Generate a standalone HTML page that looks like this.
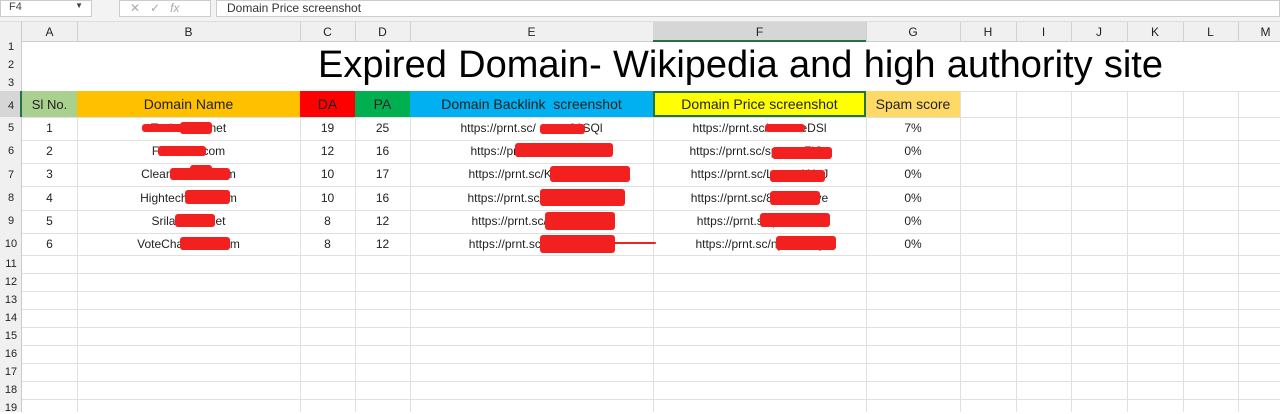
<!DOCTYPE html><html><head><style>
body{margin:0;width:1280px;height:412px;overflow:hidden;background:#fff;font-family:"Liberation Sans",sans-serif;position:relative}
.a{position:absolute;box-sizing:border-box}
.t{position:absolute;font-size:12px;color:#222;text-align:center;white-space:nowrap}
.r{position:absolute;background:#f2201e;border-radius:3px}
</style></head><body>
<div class="a" style="left:0;top:0;width:1280px;height:22px;background:#f3f3f3;border-bottom:1px solid #ddd"></div>
<div class="a" style="left:0;top:0;width:92px;height:17px;background:#fff;border:1px solid #ccc;font-size:11px;padding:0 8px;color:#444">F4<span style="float:right;font-size:8px">▼</span></div>
<div class="a" style="left:119px;top:0;width:92px;height:17px;background:#fff;border:1px solid #ccc;font-size:12px;color:#aaa;padding-left:10px">✕ &nbsp; ✓ &nbsp; <i>fx</i></div>
<div class="a" style="left:216px;top:0;width:1064px;height:17px;background:#fff;border:1px solid #ccc;font-size:12px;color:#333;padding-left:10px">Domain Price screenshot</div>
<div class="a" style="left:0;top:22px;width:1280px;height:20px;background:#f0f0f0;border-bottom:1px solid #ccc"></div>
<div class="a" style="left:0;top:22px;width:22px;height:390px;background:#f0f0f0;border-right:1px solid #ccc"></div>
<svg class="a" style="left:0;top:0" width="1280" height="412">
<g stroke="#e0e0e0" stroke-width="1">
<line x1="22" y1="117.5" x2="1280" y2="117.5"/><line x1="22" y1="140.5" x2="1280" y2="140.5"/><line x1="22" y1="163.5" x2="1280" y2="163.5"/><line x1="22" y1="186.5" x2="1280" y2="186.5"/><line x1="22" y1="210.5" x2="1280" y2="210.5"/><line x1="22" y1="233.5" x2="1280" y2="233.5"/><line x1="22" y1="255.5" x2="1280" y2="255.5"/><line x1="22" y1="273.5" x2="1280" y2="273.5"/><line x1="22" y1="291.5" x2="1280" y2="291.5"/><line x1="22" y1="309.5" x2="1280" y2="309.5"/><line x1="22" y1="327.5" x2="1280" y2="327.5"/><line x1="22" y1="345.5" x2="1280" y2="345.5"/><line x1="22" y1="363.5" x2="1280" y2="363.5"/><line x1="22" y1="381.5" x2="1280" y2="381.5"/><line x1="22" y1="399.5" x2="1280" y2="399.5"/>
<line x1="960" y1="91.5" x2="1280" y2="91.5"/>
<line x1="77.5" y1="117" x2="77.5" y2="412"/><line x1="300.5" y1="117" x2="300.5" y2="412"/><line x1="355.5" y1="117" x2="355.5" y2="412"/><line x1="410.5" y1="117" x2="410.5" y2="412"/><line x1="653.5" y1="117" x2="653.5" y2="412"/><line x1="866.5" y1="117" x2="866.5" y2="412"/><line x1="960.5" y1="91" x2="960.5" y2="412"/><line x1="1016.5" y1="91" x2="1016.5" y2="412"/><line x1="1071.5" y1="91" x2="1071.5" y2="412"/><line x1="1127.5" y1="91" x2="1127.5" y2="412"/><line x1="1183.5" y1="91" x2="1183.5" y2="412"/><line x1="1238.5" y1="91" x2="1238.5" y2="412"/>
</g>
<g stroke="#d0d0d0"><line x1="77.5" y1="22" x2="77.5" y2="42"/><line x1="300.5" y1="22" x2="300.5" y2="42"/><line x1="355.5" y1="22" x2="355.5" y2="42"/><line x1="410.5" y1="22" x2="410.5" y2="42"/><line x1="653.5" y1="22" x2="653.5" y2="42"/><line x1="866.5" y1="22" x2="866.5" y2="42"/><line x1="960.5" y1="22" x2="960.5" y2="42"/><line x1="1016.5" y1="22" x2="1016.5" y2="42"/><line x1="1071.5" y1="22" x2="1071.5" y2="42"/><line x1="1127.5" y1="22" x2="1127.5" y2="42"/><line x1="1183.5" y1="22" x2="1183.5" y2="42"/><line x1="1238.5" y1="22" x2="1238.5" y2="42"/></g>
</svg>
<div class="a" style="left:653px;top:22px;width:213px;height:20px;background:#d6d6d6;border-bottom:2px solid #217346"></div>
<div class="a" style="left:0;top:91px;width:22px;height:26px;background:#d6d6d6;border-right:2px solid #217346"></div>
<div class="t" style="left:22px;top:25px;width:55px">A</div><div class="t" style="left:77px;top:25px;width:223px">B</div><div class="t" style="left:300px;top:25px;width:55px">C</div><div class="t" style="left:355px;top:25px;width:55px">D</div><div class="t" style="left:410px;top:25px;width:243px">E</div><div class="t" style="left:653px;top:25px;width:213px">F</div><div class="t" style="left:866px;top:25px;width:94px">G</div><div class="t" style="left:960px;top:25px;width:56px">H</div><div class="t" style="left:1016px;top:25px;width:55px">I</div><div class="t" style="left:1071px;top:25px;width:56px">J</div><div class="t" style="left:1127px;top:25px;width:56px">K</div><div class="t" style="left:1183px;top:25px;width:55px">L</div><div class="t" style="left:1238px;top:25px;width:55px">M</div>
<div class="t" style="left:0;width:22px;top:41px;font-size:11px">1</div><div class="t" style="left:0;width:22px;top:59px;font-size:11px">2</div><div class="t" style="left:0;width:22px;top:77px;font-size:11px">3</div><div class="t" style="left:0;width:22px;top:100px;font-size:11px">4</div><div class="t" style="left:0;width:22px;top:122px;font-size:11px">5</div><div class="t" style="left:0;width:22px;top:145px;font-size:11px">6</div><div class="t" style="left:0;width:22px;top:169px;font-size:11px">7</div><div class="t" style="left:0;width:22px;top:192px;font-size:11px">8</div><div class="t" style="left:0;width:22px;top:215px;font-size:11px">9</div><div class="t" style="left:0;width:22px;top:238px;font-size:11px">10</div><div class="t" style="left:0;width:22px;top:258px;font-size:11px">11</div><div class="t" style="left:0;width:22px;top:276px;font-size:11px">12</div><div class="t" style="left:0;width:22px;top:294px;font-size:11px">13</div><div class="t" style="left:0;width:22px;top:312px;font-size:11px">14</div><div class="t" style="left:0;width:22px;top:330px;font-size:11px">15</div><div class="t" style="left:0;width:22px;top:348px;font-size:11px">16</div><div class="t" style="left:0;width:22px;top:366px;font-size:11px">17</div><div class="t" style="left:0;width:22px;top:384px;font-size:11px">18</div><div class="t" style="left:0;width:22px;top:402px;font-size:11px">19</div>
<div class="t" style="left:318px;top:44px;font-size:38px;color:#000;text-align:left;width:845px;text-align:justify;text-align-last:justify">Expired Domain- Wikipedia and high authority site</div>
<div class="a" style="left:22px;top:91px;width:55px;height:26px;background:#a9d08e"></div>
<div class="a" style="left:77px;top:91px;width:223px;height:26px;background:#ffc000"></div>
<div class="a" style="left:300px;top:91px;width:55px;height:26px;background:#ff0000"></div>
<div class="a" style="left:355px;top:91px;width:55px;height:26px;background:#00b050"></div>
<div class="a" style="left:410px;top:91px;width:243px;height:26px;background:#00b0f0"></div>
<div class="a" style="left:653px;top:91px;width:213px;height:26px;background:#ffff00;border:2px solid #217346"></div>
<div class="a" style="left:866px;top:91px;width:94px;height:26px;background:#ffd966"></div>
<div class="t" style="left:22px;width:55px;top:97px;font-size:13px">Sl No.</div>
<div class="t" style="left:77px;width:223px;top:96px;font-size:14px">Domain Name</div>
<div class="t" style="left:300px;width:55px;top:96px;font-size:14px">DA</div>
<div class="t" style="left:355px;width:55px;top:96px;font-size:14px">PA</div>
<div class="t" style="left:410px;width:243px;top:96px;font-size:14px">Domain Backlink &nbsp;screenshot</div>
<div class="t" style="left:653px;width:213px;top:96px;font-size:14px">Domain Price screenshot</div>
<div class="t" style="left:866px;width:94px;top:96px;font-size:14px">Spam score</div>
<div style="position:absolute;left:0;top:121px">
<div class="t" style="left:22px;width:55px;top:0">1</div><div class="t" style="left:77px;width:223px;top:0">Techn&nbsp;&nbsp;&nbsp;&nbsp;&nbsp;&nbsp;&nbsp;.net</div><div class="t" style="left:300px;width:55px;top:0">19</div><div class="t" style="left:355px;width:55px;top:0">25</div><div class="t" style="left:410px;width:243px;top:0">https://prnt.sc/&nbsp;&nbsp;&nbsp;&nbsp;&nbsp;&nbsp;&nbsp;&nbsp;&nbsp;t01SQl</div><div class="t" style="left:653px;width:213px;top:0">https://prnt.sc/&nbsp;&nbsp;&nbsp;&nbsp;&nbsp;&nbsp;&nbsp;&nbsp;xeDSl</div><div class="t" style="left:866px;width:94px;top:0">7%</div>
<div class="t" style="left:22px;width:55px;top:23px">2</div><div class="t" style="left:77px;width:223px;top:23px">Fa&nbsp;&nbsp;&nbsp;&nbsp;&nbsp;&nbsp;&nbsp;&nbsp;&nbsp;&nbsp;.com</div><div class="t" style="left:300px;width:55px;top:23px">12</div><div class="t" style="left:355px;width:55px;top:23px">16</div><div class="t" style="left:410px;width:243px;top:23px">https://prnt.sc/b&nbsp;&nbsp;&nbsp;&nbsp;&nbsp;&nbsp;&nbsp;&nbsp;&nbsp;&nbsp;&nbsp;&nbsp;</div><div class="t" style="left:653px;width:213px;top:23px">https://prnt.sc/sp&nbsp;&nbsp;&nbsp;&nbsp;&nbsp;&nbsp;&nbsp;&nbsp;ZlGv</div><div class="t" style="left:866px;width:94px;top:23px">0%</div>
<div class="t" style="left:22px;width:55px;top:46px">3</div><div class="t" style="left:77px;width:223px;top:46px">CleanT&nbsp;&nbsp;&nbsp;&nbsp;&nbsp;&nbsp;&nbsp;&nbsp;&nbsp;.com</div><div class="t" style="left:300px;width:55px;top:46px">10</div><div class="t" style="left:355px;width:55px;top:46px">17</div><div class="t" style="left:410px;width:243px;top:46px">https://prnt.sc/Kk&nbsp;&nbsp;&nbsp;&nbsp;&nbsp;&nbsp;&nbsp;&nbsp;&nbsp;&nbsp;&nbsp;</div><div class="t" style="left:653px;width:213px;top:46px">https://prnt.sc/L&nbsp;&nbsp;&nbsp;&nbsp;&nbsp;&nbsp;&nbsp;&nbsp;1f4zJ</div><div class="t" style="left:866px;width:94px;top:46px">0%</div>
<div class="t" style="left:22px;width:55px;top:70px">4</div><div class="t" style="left:77px;width:223px;top:70px">Hightech&nbsp;&nbsp;&nbsp;&nbsp;&nbsp;&nbsp;&nbsp;.com</div><div class="t" style="left:300px;width:55px;top:70px">10</div><div class="t" style="left:355px;width:55px;top:70px">16</div><div class="t" style="left:410px;width:243px;top:70px">https://prnt.sc/bl&nbsp;&nbsp;&nbsp;&nbsp;&nbsp;&nbsp;&nbsp;&nbsp;&nbsp;&nbsp;&nbsp;&nbsp;&nbsp;</div><div class="t" style="left:653px;width:213px;top:70px">https://prnt.sc/8&nbsp;&nbsp;&nbsp;&nbsp;&nbsp;&nbsp;&nbsp;&nbsp;&nbsp;k6ve</div><div class="t" style="left:866px;width:94px;top:70px">0%</div>
<div class="t" style="left:22px;width:55px;top:93px">5</div><div class="t" style="left:77px;width:223px;top:93px">Srilan&nbsp;&nbsp;&nbsp;&nbsp;&nbsp;&nbsp;&nbsp;.net</div><div class="t" style="left:300px;width:55px;top:93px">8</div><div class="t" style="left:355px;width:55px;top:93px">12</div><div class="t" style="left:410px;width:243px;top:93px">https://prnt.sc/X&nbsp;&nbsp;&nbsp;&nbsp;&nbsp;&nbsp;&nbsp;&nbsp;&nbsp;&nbsp;&nbsp;</div><div class="t" style="left:653px;width:213px;top:93px">https://prnt.sc/p&nbsp;&nbsp;&nbsp;&nbsp;&nbsp;&nbsp;&nbsp;&nbsp;&nbsp;8h</div><div class="t" style="left:866px;width:94px;top:93px">0%</div>
<div class="t" style="left:22px;width:55px;top:116px">6</div><div class="t" style="left:77px;width:223px;top:116px">VoteChar&nbsp;&nbsp;&nbsp;&nbsp;&nbsp;&nbsp;&nbsp;&nbsp;.com</div><div class="t" style="left:300px;width:55px;top:116px">8</div><div class="t" style="left:355px;width:55px;top:116px">12</div><div class="t" style="left:410px;width:243px;top:116px">https://prnt.sc/_t&nbsp;&nbsp;&nbsp;&nbsp;&nbsp;&nbsp;&nbsp;&nbsp;&nbsp;&nbsp;&nbsp;&nbsp;</div><div class="t" style="left:653px;width:213px;top:116px">https://prnt.sc/ny&nbsp;&nbsp;&nbsp;&nbsp;&nbsp;&nbsp;&nbsp;&nbsp;&nbsp;&nbsp;g</div><div class="t" style="left:866px;width:94px;top:116px">0%</div>
</div>
<div class="r" style="left:142px;top:124px;width:70px;height:8px"></div><div class="r" style="left:180px;top:122px;width:32px;height:12px"></div>
<div class="r" style="left:158px;top:146px;width:48px;height:10px"></div>
<div class="r" style="left:170px;top:168px;width:60px;height:12px"></div><div class="r" style="left:190px;top:165px;width:22px;height:6px"></div>
<div class="r" style="left:185px;top:190px;width:45px;height:14px"></div>
<div class="r" style="left:175px;top:214px;width:40px;height:13px"></div>
<div class="r" style="left:180px;top:237px;width:50px;height:13px"></div>
<div class="r" style="left:540px;top:124px;width:45px;height:10px"></div>
<div class="r" style="left:515px;top:143px;width:98px;height:14px"></div>
<div class="r" style="left:550px;top:166px;width:80px;height:16px"></div>
<div class="r" style="left:540px;top:189px;width:85px;height:17px"></div>
<div class="r" style="left:545px;top:212px;width:70px;height:18px"></div>
<div class="r" style="left:540px;top:235px;width:75px;height:18px"></div><div class="r" style="left:600px;top:242px;width:56px;height:2px"></div>
<div class="r" style="left:765px;top:124px;width:40px;height:8px"></div>
<div class="r" style="left:772px;top:147px;width:60px;height:12px"></div>
<div class="r" style="left:770px;top:170px;width:55px;height:12px"></div>
<div class="r" style="left:770px;top:191px;width:50px;height:14px"></div>
<div class="r" style="left:760px;top:213px;width:70px;height:14px"></div>
<div class="r" style="left:776px;top:236px;width:60px;height:14px"></div>
</body></html>
